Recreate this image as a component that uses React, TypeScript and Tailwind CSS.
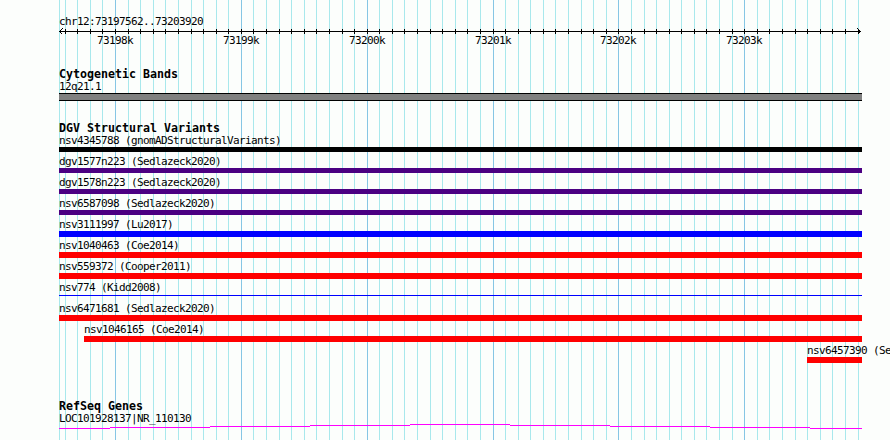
import React from "react";

const MINOR = 12.585;
const LEFT = 59;
const RIGHT = 862;
const TRACK_W = RIGHT - LEFT;

const grid: { x: number; major: boolean }[] = [{ x: LEFT, major: false }];
for (let i = -4; i <= 59; i++) {
  grid.push({ x: Math.round(115 + i * MINOR), major: i % 10 === 0 });
}

const majors = [73198, 73199, 73200, 73201, 73202, 73203].map((kb, i) => ({
  label: `${kb}k`,
  x: Math.round(115 + i * 10 * MINOR),
}));

const variants = [
  { name: "nsv4345788 (gnomADStructuralVariants)", start: 59, bar: "mt-[1px] h-[5px] bg-black" },
  { name: "dgv1577n223 (Sedlazeck2020)", start: 59, bar: "mt-[1px] h-[5px] bg-[#4b0082]" },
  { name: "dgv1578n223 (Sedlazeck2020)", start: 59, bar: "mt-[1px] h-[5px] bg-[#4b0082]" },
  { name: "nsv6587098 (Sedlazeck2020)", start: 59, bar: "mt-[1px] h-[5px] bg-[#4b0082]" },
  { name: "nsv3111997 (Lu2017)", start: 59, bar: "mt-[1px] h-[6px] bg-[#0000ff]" },
  { name: "nsv1040463 (Coe2014)", start: 59, bar: "mt-[1px] h-[6px] bg-[#ff0000]" },
  { name: "nsv559372 (Cooper2011)", start: 59, bar: "mt-[1px] h-[6px] bg-[#ff0000]" },
  { name: "nsv774 (Kidd2008)", start: 59, bar: "mt-[2px] h-[1px] bg-[#0000ff]" },
  { name: "nsv6471681 (Sedlazeck2020)", start: 59, bar: "mt-[1px] h-[6px] bg-[#ff0000]" },
  { name: "nsv1046165 (Coe2014)", start: 84, bar: "mt-[1px] h-[6px] bg-[#ff0000]" },
  { name: "nsv6457390 (Sedlazeck2020)", start: 807, bar: "mt-[1px] h-[6px] bg-[#ff0000]" },
];

// intron "hat" of the gene, stepped like the GD rendering
const hat = [
  [59, 110, 4],
  [110, 210, 3],
  [210, 310, 2],
  [310, 410, 1],
  [410, 510, 0],
  [510, 610, 1],
  [610, 710, 2],
  [710, 810, 3],
  [810, 862, 4],
];

function Title({ children }: { children: React.ReactNode }) {
  return (
    <div className="h-[12px] leading-[12px] text-[11.63px] font-bold tracking-normal whitespace-nowrap">
      {children}
    </div>
  );
}

function Label({ children }: { children: React.ReactNode }) {
  return <div className="h-[11px] leading-[11px] whitespace-nowrap">{children}</div>;
}

export default function App() {
  return (
    <div className="relative w-[890px] h-[440px] overflow-hidden bg-[#fcfefc] text-black font-['DejaVu_Sans_Mono',monospace] text-[11px] tracking-[-0.622px]">
      <svg className="absolute inset-0" width={890} height={440} shapeRendering="crispEdges">
        {grid.map((g) => (
          <rect key={g.x} x={g.x} y={0} width={1} height={440} fill={g.major ? "#86c6e4" : "#a8e8ec"} />
        ))}
      </svg>

      <div className="relative pl-[59px] pt-[16px]">
        {/* ruler */}
        <Label>chr12:73197562..73203920</Label>
        <svg className="block" width={TRACK_W} height={8} shapeRendering="crispEdges">
          <rect x={0} y={4} width={TRACK_W - 1} height={1} fill="#000" />
          {grid.slice(1).map((g) => (
            <rect key={g.x} x={g.x - LEFT} y={2} width={1} height={5} fill="#000" />
          ))}
          <path d="M0.5 4.5 L3.5 1.5 M0.5 4.5 L3.5 7.5" stroke="#000" fill="none" />
          <path d="M801.5 4.5 L798.5 1.5 M801.5 4.5 L798.5 7.5" stroke="#000" fill="none" />
        </svg>
        <div className="relative h-[11px] leading-[11px]">
          {majors.map((m) => (
            <span key={m.label} className="absolute top-0 whitespace-nowrap" style={{ left: m.x - 18 - LEFT }}>
              {m.label}
            </span>
          ))}
        </div>

        {/* cytobands */}
        <div className="mt-[22px]">
          <Title>Cytogenetic Bands</Title>
          <div className="mt-[1px]">
            <Label>12q21.1</Label>
          </div>
          <div className="mt-[1px] h-[8px] w-[803px] border-y border-black bg-[#808080]" />
        </div>

        {/* DGV */}
        <div className="mt-[21px]">
          <Title>DGV Structural Variants</Title>
          <div className="mt-[1px] flex flex-col">
            {variants.map((v) => (
              <div key={v.name} className="h-[21px]" style={{ marginLeft: v.start - LEFT }}>
                <Label>{v.name}</Label>
                <div className={v.bar} style={{ width: RIGHT - v.start }} />
              </div>
            ))}
          </div>
        </div>

        {/* RefSeq */}
        <div className="mt-[34px]">
          <Title>RefSeq Genes</Title>
          <div className="mt-[1px]">
            <Label>LOC101928137|NR_110130</Label>
          </div>
          <svg className="block" width={TRACK_W} height={5} shapeRendering="crispEdges">
            {hat.map(([a, b, y]) => (
              <rect key={a} x={a - LEFT} y={y} width={b - a} height={1} fill="#ff00ff" />
            ))}
          </svg>
        </div>
      </div>
    </div>
  );
}
